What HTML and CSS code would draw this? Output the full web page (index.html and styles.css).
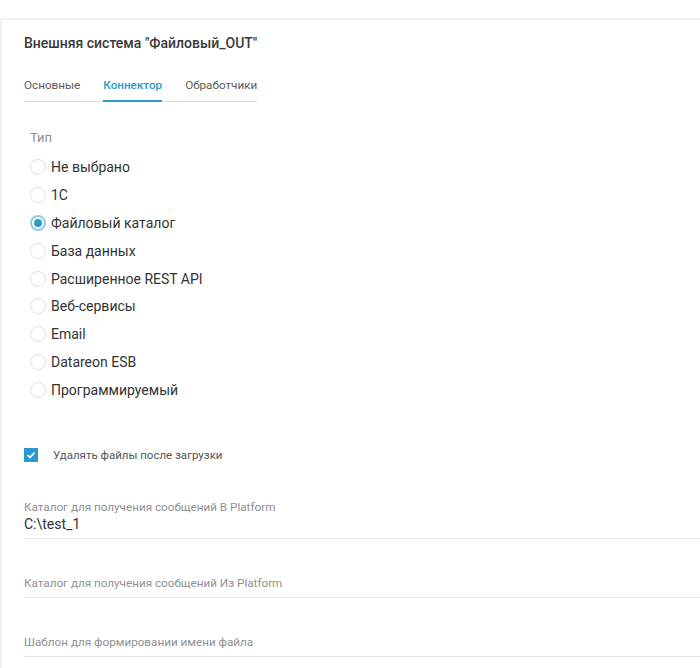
FILE: index.html
```html
<!DOCTYPE html>
<html lang="ru">
<head>
    <meta charset="UTF-8">
    <meta name="viewport" content="width=device-width, initial-scale=1.0">
    <title>Внешняя система</title>
    <link rel="stylesheet" href="styles.css">
</head>
<body>
    <div class="topbar"></div>

    <div class="panel">
        <h1 class="panel-title">Внешняя система "Файловый_OUT"</h1>

        <div class="tabs">
            <div class="tab">Основные</div>
            <div class="tab active">Коннектор</div>
            <div class="tab">Обработчики</div>
        </div>

        <div class="type-group">
            <div class="group-label">Тип</div>
            <label class="radio"><span class="radio-dot"></span>Не выбрано</label>
            <label class="radio"><span class="radio-dot"></span>1C</label>
            <label class="radio checked"><span class="radio-dot"></span>Файловый каталог</label>
            <label class="radio"><span class="radio-dot"></span>База данных</label>
            <label class="radio"><span class="radio-dot"></span>Расширенное REST API</label>
            <label class="radio"><span class="radio-dot"></span>Веб-сервисы</label>
            <label class="radio"><span class="radio-dot"></span>Email</label>
            <label class="radio"><span class="radio-dot"></span>Datareon ESB</label>
            <label class="radio"><span class="radio-dot"></span>Программируемый</label>
        </div>

        <label class="checkbox">
            <span class="checkbox-box">
                <svg width="10" height="8" viewBox="0 0 10 8">
                    <path d="M1.5 4.2 L4 6.4 L8.6 1.6" fill="none" stroke="#ffffff" stroke-width="1.6"/>
                </svg>
            </span>
            Удалять файлы после загрузки
        </label>

        <div class="field first">
            <div class="field-label">Каталог для получения сообщений В Platform</div>
            <div class="field-value">C:\test_1</div>
        </div>

        <div class="field">
            <div class="field-label">Каталог для получения сообщений Из Platform</div>
            <div class="field-value"></div>
        </div>

        <div class="field">
            <div class="field-label">Шаблон для формировании имени файла</div>
            <div class="field-value"></div>
        </div>
    </div>
</body>
</html>
```

FILE: styles.css
```css
:root {
    --accent: #2a9acb;
    --text: #333333;
    --muted: #8f8f8f;
    --line: #e3e3e3;
}

* {
    box-sizing: border-box;
    margin: 0;
    padding: 0;
}

body {
    font-family: Roboto, "Noto Sans", sans-serif;
    background-color: #ffffff;
    color: var(--text);
    width: 700px;
    overflow: hidden;
}

.topbar {
    height: 20px;
    background-color: #ffffff;
    border-bottom: 2px solid #f1f1f1;
}

.panel {
    border-left: 2px solid #f2f2f2;
    padding: 14px 0 0 22px;
    min-height: 648px;
}

.panel-title {
    font-size: 14px;
    font-weight: 500;
    color: #3a3a3a;
    line-height: 18px;
}

.tabs {
    display: flex;
    width: 233px;
    margin-top: 25px;
    border-bottom: 1px solid #dedede;
}

.tab {
    font-size: 11.7px;
    color: #5a5a5a;
    line-height: 16px;
    padding: 0 0 8px;
    margin-right: 23px;
    margin-bottom: -1px;
    white-space: nowrap;
}

.tab:last-child {
    margin-right: 0;
}

.tab.active {
    color: var(--accent);
    font-weight: 500;
    border-bottom: 2px solid var(--accent);
    padding-bottom: 7px;
}

.type-group {
    margin-top: 27px;
    padding-left: 6px;
}

.group-label {
    font-size: 13px;
    color: var(--muted);
    line-height: 18px;
    margin-bottom: 6px;
}

.radio {
    display: flex;
    align-items: center;
    height: 27.9px;
    font-size: 14px;
    color: var(--text);
}

.radio-dot {
    width: 16px;
    height: 16px;
    border-radius: 50%;
    border: 1px solid #e0e0e0;
    margin-right: 5px;
    flex-shrink: 0;
    display: flex;
    align-items: center;
    justify-content: center;
}

.radio.checked .radio-dot {
    border: 2px solid #8fcbe6;
}

.radio.checked .radio-dot::after {
    content: "";
    width: 8px;
    height: 8px;
    border-radius: 50%;
    background-color: var(--accent);
}

.checkbox {
    display: flex;
    align-items: center;
    margin-top: 44px;
    font-size: 11.5px;
    color: #555555;
    line-height: 14px;
}

.checkbox-box {
    width: 14px;
    height: 14px;
    background-color: var(--accent);
    display: flex;
    align-items: center;
    justify-content: center;
    margin-right: 15px;
}

.field {
    border-bottom: 1px solid var(--line);
    margin-top: 37px;
    padding-bottom: 5px;
}

.field.first {
    margin-top: 38px;
}

.field-label {
    font-size: 11.7px;
    color: var(--muted);
    line-height: 14px;
}

.field-value {
    font-size: 14px;
    color: var(--text);
    line-height: 18px;
    min-height: 1px;
    margin-top: 1px;
}
```
